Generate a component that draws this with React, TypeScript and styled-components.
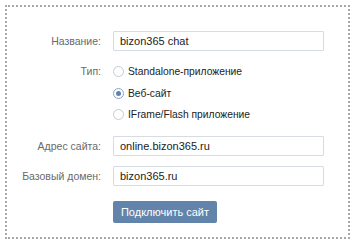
import React, {useState} from 'react';
import styled, {createGlobalStyle} from 'styled-components';

const GlobalStyle = createGlobalStyle`
  html, body {
    margin: 0;
    padding: 0;
    background: #fff;
  }
  body {
    font-family: "Liberation Sans", Arial, sans-serif;
    font-size: 11px;
    color: #222;
  }
`;

const Frame = styled.div`
  box-sizing: border-box;
  margin: 5px 0 0 5px;
  width: 345px;
  height: 234px;
  border: 2px dotted #a8a8a8;
  padding: 24px 24px 17px 0;
`;

const Form = styled.form`
  display: grid;
  grid-template-columns: 94px 211px;
  column-gap: 12px;
  row-gap: 10px;
  align-items: start;
`;

const Label = styled.label<{$tall?: boolean}>`
  text-align: right;
  color: #6a6a6a;
  font-size: 10.5px;
  line-height: ${(p) => (p.$tall ? '21px' : '20px')};
  white-space: nowrap;
`;

const TextInput = styled.input`
  box-sizing: border-box;
  width: 100%;
  height: 20px;
  margin: 0;
  padding: 0 6px;
  border: 1px solid #d7dce2;
  border-radius: 1px;
  font-family: inherit;
  font-size: 11px;
  color: #222;
  outline: none;
`;

const RadioList = styled.div`
  display: flex;
  flex-direction: column;
`;

const RadioRow = styled.label`
  display: flex;
  align-items: center;
  height: 21.5px;
  gap: 4px;
  font-size: 10.3px;
  cursor: pointer;
  color: #222;
  white-space: nowrap;
`;

const RadioMark = styled.span<{$checked: boolean}>`
  box-sizing: border-box;
  width: 11px;
  height: 11px;
  border-radius: 50%;
  border: 1px solid ${(p) => (p.$checked ? '#8aa4c2' : '#c5ccd4')};
  display: flex;
  align-items: center;
  justify-content: center;
  &::after {
    content: '';
    width: 5px;
    height: 5px;
    border-radius: 50%;
    background: #5f83ab;
    display: ${(p) => (p.$checked ? 'block' : 'none')};
  }
`;

const Submit = styled.button`
  grid-column: 2;
  justify-self: start;
  margin-top: 5px;
  width: 104px;
  height: 22px;
  padding: 0;
  border: none;
  border-radius: 2px;
  background: #6283aa;
  color: #fff;
  font-family: "Liberation Sans", Arial, sans-serif;
  font-size: 11px;
  cursor: pointer;
`;

const types = ['Standalone-приложение', 'Веб-сайт', 'IFrame/Flash приложение'];

export default function App() {
  const [type, setType] = useState(1);
  return (
    <>
      <GlobalStyle />
      <Frame>
        <Form onSubmit={(e) => e.preventDefault()}>
          <Label>Название:</Label>
          <TextInput defaultValue="bizon365 chat" />

          <Label $tall>Тип:</Label>
          <RadioList>
            {types.map((t, i) => (
              <RadioRow key={t} onClick={() => setType(i)}>
                <RadioMark $checked={type === i} />
                {t}
              </RadioRow>
            ))}
          </RadioList>

          <Label>Адрес сайта:</Label>
          <TextInput defaultValue="online.bizon365.ru" />

          <Label>Базовый домен:</Label>
          <TextInput defaultValue="bizon365.ru" />

          <Submit type="submit">Подключить сайт</Submit>
        </Form>
      </Frame>
    </>
  );
}
